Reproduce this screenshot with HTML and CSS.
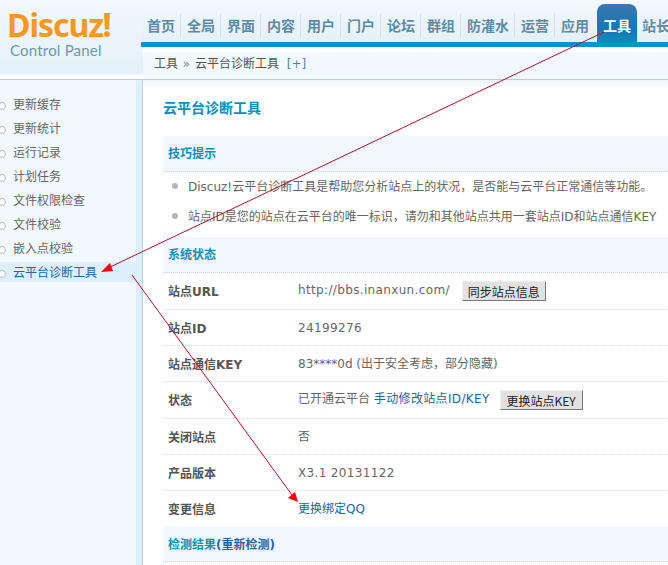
FILE: index.html
```html
<!DOCTYPE html>
<html lang="zh">
<head>
<meta charset="utf-8">
<title>云平台诊断工具</title>
<link rel="stylesheet" href="styles.css">
</head>
<body>
<div class="app">
  <aside class="left">
    <div class="logo">
      <div class="logo-mark">Discuz<span class="bang">!</span></div>
      <div class="logo-sub">Control Panel</div>
    </div>
    <ul class="side">
      <li>更新缓存</li>
      <li>更新统计</li>
      <li>运行记录</li>
      <li>计划任务</li>
      <li>文件权限检查</li>
      <li>文件校验</li>
      <li>嵌入点校验</li>
      <li class="on">云平台诊断工具</li>
    </ul>
  </aside>
  <div class="right">
    <nav class="nav">
      <span class="nv">首页</span><span class="nv">全局</span><span class="nv">界面</span><span class="nv">内容</span><span class="nv">用户</span><span class="nv">门户</span><span class="nv">论坛</span><span class="nv">群组</span><span class="nv wide">防灌水</span><span class="nv">运营</span><span class="nv last">应用</span><span class="nv cur">工具</span><span class="nv end">站长</span>
    </nav>
    <div class="crumb">工具 <em>»</em> 云平台诊断工具 <b>[+]</b></div>
    <main class="main">
      <h1>云平台诊断工具</h1>
      <div class="head">技巧提示</div>
      <ul class="tips">
        <li>Discuz!云平台诊断工具是帮助您分析站点上的状况，是否能与云平台正常通信等功能。</li>
        <li>站点ID是您的站点在云平台的唯一标识，请勿和其他站点共用一套站点ID和站点通信KEY</li>
      </ul>
      <div class="head">系统状态</div>
      <div class="row tall"><span class="k">站点URL</span><span class="v"><span class="up lat">http://bbs.inanxun.com/</span><button class="btn first">同步站点信息</button></span></div>
      <div class="row"><span class="k">站点ID</span><span class="v lat">24199276</span></div>
      <div class="row"><span class="k">站点通信KEY</span><span class="v">83****0d (出于安全考虑，部分隐藏)</span></div>
      <div class="row tall"><span class="k">状态</span><span class="v"><span class="up">已开通云平台&nbsp;<a class="lat">手动修改站点ID/KEY</a></span><button class="btn second">更换站点KEY</button></span></div>
      <div class="row"><span class="k">关闭站点</span><span class="v">否</span></div>
      <div class="row"><span class="k">产品版本</span><span class="v lat">X3.1 20131122</span></div>
      <div class="row flat"><span class="k">变更信息</span><span class="v"><a>更换绑定QQ</a></span></div>
      <div class="head low">检测结果<a>(重新检测)</a></div>
    </main>
  </div>
</div>
<svg class="arrows" width="668" height="565" viewBox="0 0 668 565" aria-hidden="true">
  <path class="ln" d="M604 32 L108 268"/>
  <path class="hd" d="M101 272 L110 263 L113 271 Z"/>
  <path class="ln" d="M132 275 L292 495"/>
  <path class="hd" d="M298 502 L288 498 L295 492 Z"/>
</svg>
</body>
</html>
```
FILE: styles.css
```css
* { box-sizing: border-box; }
html, body { margin: 0; padding: 0; height: 565px; overflow: hidden; background: #fff; }
body { font: 12px/1.5 "DejaVu Sans", "Noto Sans CJK SC", sans-serif; color: #666; position: relative; }
ul { list-style: none; margin: 0; padding: 0; }
.app { display: flex; width: 668px; height: 565px; overflow: hidden; }

.left { width: 143px; flex: none; display: flex; flex-direction: column; }
.logo { height: 80px; padding: 7px 0 0 7px; background: linear-gradient(#f2f8fc, #e4f1fa 74px, #fff 75px, #fff 79px, #b9cfdc 79px); }
.logo-mark { font: 700 32px/34px "Noto Sans", sans-serif; color: #f9981f; letter-spacing: -1px; white-space: nowrap; }
.bang { font-size: 34px; line-height: 34px; letter-spacing: 0; margin-left: -1px; }
.logo-sub { font: 400 15px/16px "Lato", sans-serif; color: #6f98ad; margin-left: 3px; letter-spacing: .2px; white-space: nowrap; }
.side { flex: 1; padding-top: 13px; background: linear-gradient(90deg, #f2f9fd 136px, #deeffb 136px, #deeffb 142px, #b7d3e6 142px); }
.side li { position: relative; height: 24px; line-height: 24px; padding-left: 13px; width: 136px; }
.side li::before { content: ""; position: absolute; left: -2px; top: 9px; width: 6px; height: 6px; border: 1px solid #bbb; border-radius: 50%; background: #fff; }
.side li.on { background: linear-gradient(transparent 1px, #deeffb 1px, #deeffb 21px, transparent 21px); color: #2366a8; }

.right { flex: 1; min-width: 0; display: flex; flex-direction: column; }
.nav { height: 47px; display: flex; align-items: flex-end; white-space: nowrap; overflow: hidden; border-bottom: 5px solid #0a94c6; margin-left: -2px; background: linear-gradient(#f2f8fc, #e4f1fa); }
.nv { flex: none; height: 24px; margin-bottom: 5px; padding: 0 6px; font: 700 14px/24px "Noto Sans CJK SC", sans-serif; color: #5e8ba3; border-right: 1px solid #d3e4ee; width: 40px; }
.nv.wide { width: 54px; }
.nv.last { border-right: 0; }
.nv.cur { height: 43px; margin-bottom: -5px; margin-left: 2px; padding: 10px 6px 0; width: 40px; border: 0; border-radius: 8px 8px 0 0; background: linear-gradient(#3c77b0, #1377b3 60%, #0f8fc6); color: #fff; line-height: 22px; }
.nv.end { border: 0; width: 60px; padding-left: 5px; }
.crumb { height: 33px; padding-left: 11px; line-height: 24px; color: #555; background: #f2f9fd; border-top: 5px solid #fff; border-bottom: 1px solid #b9cfdc; }
.crumb em { font-style: normal; color: #888; margin: 0 1px; }
.crumb b { font-weight: 400; color: #4f86ad; margin-left: 4px; }
.main { flex: 1; padding-left: 20px; background: linear-gradient(#eef5f9, #fff 10px, #fff); }
h1 { margin: 0; height: 56px; padding-top: 18px; font-size: 14px; line-height: 21px; font-weight: 700; color: #0a8fbe; }
.head { height: 36px; line-height: 37px; padding-left: 5px; font-weight: 700; color: #0a8fbe; background: #f2f7fd; border-bottom: 1px dotted #c8d4dc; }
.head.low { line-height: 39px; }
.head a { color: #2366a8; }
.tips { padding-bottom: 5px; padding-left: 25px; }
.tips li { position: relative; height: 30px; line-height: 30px; white-space: nowrap; }
.tips li::before { content: ""; position: absolute; left: -16px; top: 11px; width: 6px; height: 6px; border-radius: 50%; background: #b5b5b5; }
.row { display: flex; height: 36px; align-items: center; padding-left: 5px; border-bottom: 1px dotted #d8dfe4; white-space: nowrap; }
.row.tall { height: 37px; }
.row.flat { height: 35px; border-bottom: 0; }
.k { width: 130px; flex: none; padding-top: 2px; font-weight: 700; color: #555; }
.v { color: #666; display: inline-flex; align-items: center; }
.v a { color: #2366a8; }
.lat { letter-spacing: .35px; }
.up { padding-bottom: 2px; }
.btn { height: 20px; width: 84px; padding: 0; font: 12px "Noto Sans CJK SC", sans-serif; color: #222; background: #e2e2e2; border: 1px solid; border-color: #eee #777 #777 #eee; }
.btn.first { margin-left: 12px; }
.btn.second { margin-left: 10px; width: 83px; }

.arrows { position: absolute; left: 0; top: 0; pointer-events: none; }
.ln { fill: none; stroke: #b3122e; stroke-width: 1; }
.hd { fill: #f00; }
```
